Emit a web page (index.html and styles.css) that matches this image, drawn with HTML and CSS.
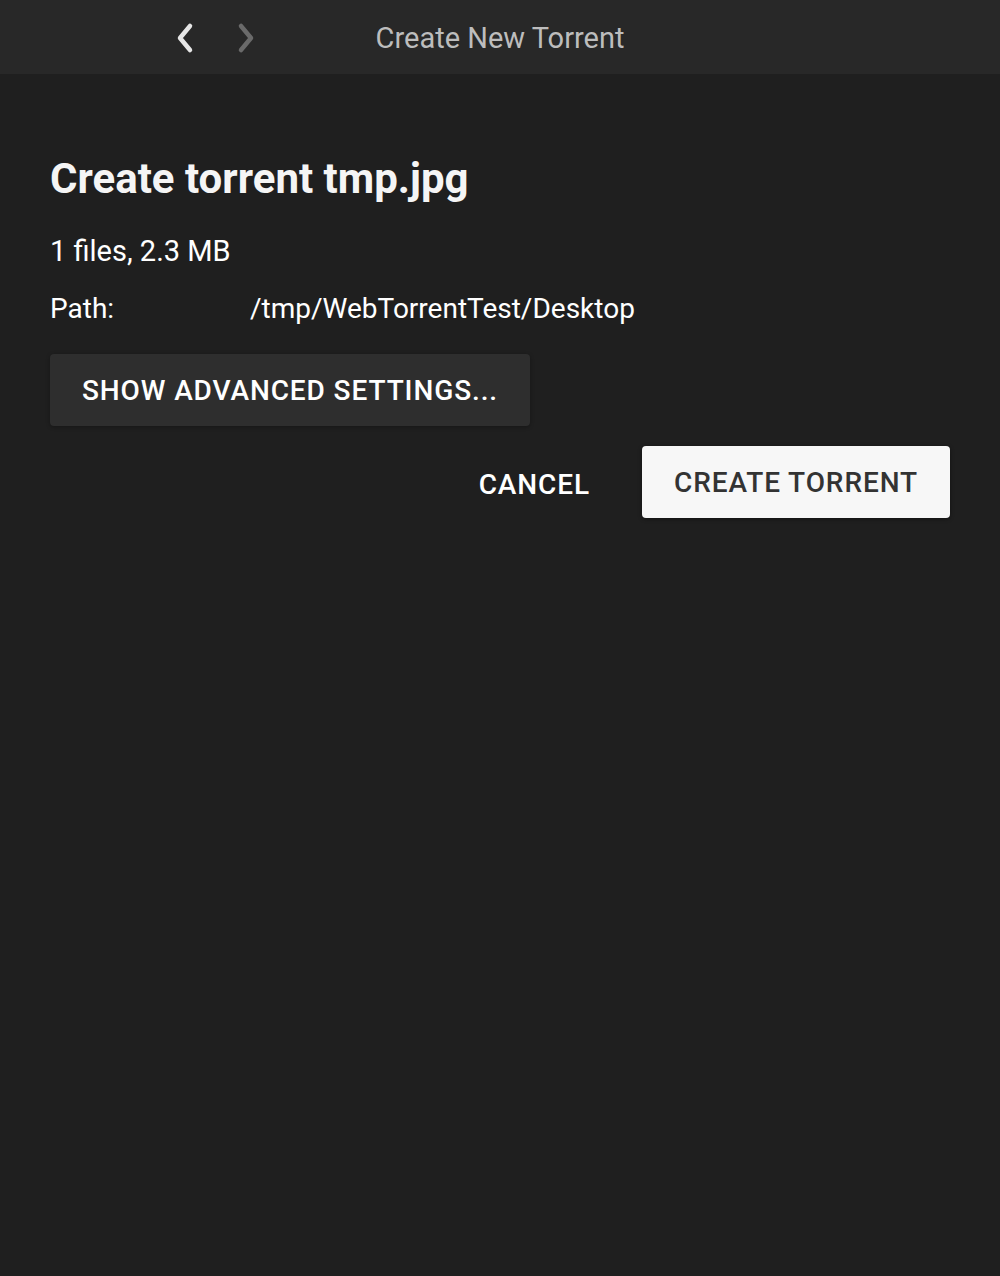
FILE: index.html
```html
<!DOCTYPE html>
<html>
<head>
<meta charset="utf-8">
<link rel="stylesheet" href="styles.css">
</head>
<body>
<header class="titlebar">
  <div class="nav">
    <svg class="chev back" width="22" height="32" viewBox="0 0 22 32"><path d="M16 4 L6 16 L16 28" fill="none" stroke="#e6e6e6" stroke-width="4.5" stroke-linecap="round" stroke-linejoin="round"/></svg>
    <svg class="chev fwd" width="22" height="32" viewBox="0 0 22 32"><path d="M6 4 L16 16 L6 28" fill="none" stroke="#6a6a6a" stroke-width="4.5" stroke-linecap="round" stroke-linejoin="round"/></svg>
  </div>
  <div class="title">Create New Torrent</div>
</header>
<main class="content">
  <h1 class="heading">Create torrent tmp.jpg</h1>
  <p class="info">1 files, 2.3 MB</p>
  <div class="path-row">
    <span class="label">Path:</span>
    <span class="value">/tmp/WebTorrentTest/Desktop</span>
  </div>
  <button class="btn btn-advanced">SHOW ADVANCED SETTINGS...</button>
  <div class="actions">
    <button class="btn btn-flat">CANCEL</button>
    <button class="btn btn-raised">CREATE TORRENT</button>
  </div>
</main>
</body>
</html>
```
FILE: styles.css
```css
html, body {
  margin: 0;
  padding: 0;
  height: 100%;
}
body {
  background: #1f1f1f;
  font-family: Roboto, "Liberation Sans", sans-serif;
  color: #ffffff;
}
.titlebar {
  position: relative;
  height: 74px;
  background: #282828;
  display: flex;
  align-items: center;
  justify-content: center;
}
.nav {
  position: absolute;
  left: 174px;
  top: 22px;
  display: flex;
  gap: 39px;
}
.chev { display: block; }
.title {
  font-size: 29px;
  color: #bdbdbd;
  position: relative;
  top: 1px;
}
.content {
  padding: 0 50px;
}
.heading {
  margin: 0;
  padding-top: 80px;
  font-size: 42px;
  font-weight: 700;
  line-height: 50px;
  color: #f5f5f5;
}
.info {
  margin: 30px 0 0;
  font-size: 29px;
  line-height: 34px;
}
.path-row {
  display: flex;
  margin-top: 24px;
  font-size: 28px;
  line-height: 34px;
}
.label { width: 200px; }
.btn {
  font-family: inherit;
  font-size: 28px;
  font-weight: 500;
  letter-spacing: 0.9px;
  border: none;
  border-radius: 4px;
  cursor: pointer;
  height: 72px;
}
.btn-advanced {
  margin-top: 28px;
  background: #2e2e2e;
  color: #ffffff;
  width: 480px;
  box-shadow: 0 1px 4px rgba(0,0,0,0.3);
}
.actions {
  display: flex;
  justify-content: flex-end;
  align-items: center;
  margin-top: 20px;
  gap: 20px;
}
.btn-flat {
  background: transparent;
  color: #ffffff;
  padding: 0 32px;
  position: relative;
  top: 2px;
}
.btn-raised {
  background: #f7f7f7;
  color: #333333;
  width: 308px;
  box-shadow: 0 1px 4px rgba(0,0,0,0.4);
}
```
